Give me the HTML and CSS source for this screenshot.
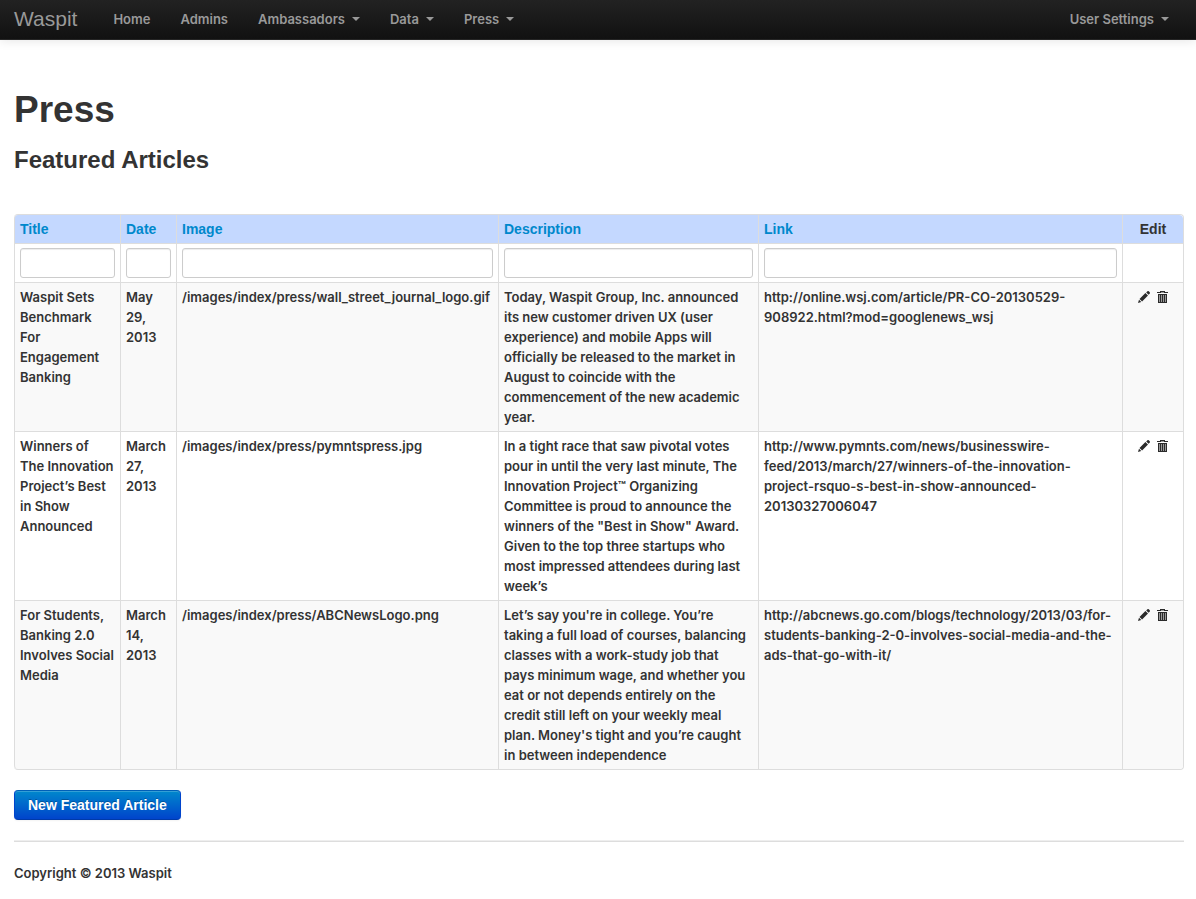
FILE: index.html
```html
<!DOCTYPE html>
<html lang="en">
<head>
<meta charset="utf-8">
<title>Press - Waspit</title>
<link rel="stylesheet" href="styles.css">
</head>
<body>
<svg class="sprite" aria-hidden="true">
  <symbol id="icon-pencil" viewBox="0 0 14 14">
    <path d="M1 13l1-3.300 2.300 2.200zM2.500 9L8.400 3l2.600 2.600-5.900 5.900zM9.200 2.400l1.200-1.200q.7-.6 1.400.1l.9.900q.7.700.1 1.400l-1.200 1.200z"/>
  </symbol>
  <symbol id="icon-trash" viewBox="0 0 14 14">
    <path d="M5 1h5v1h3v1H2V2h3z"/>
    <path d="M3 4h9v9H3z"/>
    <path class="slats" d="M4.500 5v7M6.500 5v7M8.500 5v7M10.500 5v7M6 2.500h3"/>
  </symbol>
</svg>
<nav class="navbar">
  <a class="brand" href="#">Waspit</a>
  <ul class="nav">
    <li><a href="#">Home</a></li>
    <li><a href="#">Admins</a></li>
    <li><a href="#">Ambassadors<span class="caret"></span></a></li>
    <li><a href="#">Data<span class="caret"></span></a></li>
    <li><a href="#">Press<span class="caret"></span></a></li>
  </ul>
  <ul class="nav nav-right">
    <li><a href="#">User Settings<span class="caret"></span></a></li>
  </ul>
</nav>
<main class="container">
  <h1>Press</h1>
  <h2>Featured Articles</h2>
  <table class="articles">
    <colgroup>
      <col class="col-title"><col class="col-date"><col class="col-image"><col class="col-description"><col><col class="col-edit">
    </colgroup>
    <thead>
      <tr>
        <th><a href="#">Title</a></th>
        <th><a href="#">Date</a></th>
        <th><a href="#">Image</a></th>
        <th><a href="#">Description</a></th>
        <th><a href="#">Link</a></th>
        <th class="edit">Edit</th>
      </tr>
      <tr class="filters">
        <td><input type="text" aria-label="Filter by title"></td>
        <td><input type="text" aria-label="Filter by date"></td>
        <td><input type="text" aria-label="Filter by image"></td>
        <td><input type="text" aria-label="Filter by description"></td>
        <td><input type="text" aria-label="Filter by link"></td>
        <td></td>
      </tr>
    </thead>
    <tbody>
      <tr>
        <td>Waspit Sets Benchmark For Engagement Banking</td>
        <td>May 29, 2013</td>
        <td>/images/index/press/wall_street_journal_logo.gif</td>
        <td>Today, Waspit Group, Inc. announced its new customer driven UX (user experience) and mobile Apps will officially be released to the market in August to coincide with the commencement of the new academic year.</td>
        <td>http://online.wsj.com/article/PR-CO-20130529-908922.html?mod=googlenews_wsj</td>
        <td class="edit"><div class="actions"><a href="#" aria-label="Edit"><svg><use href="#icon-pencil"/></svg></a><a href="#" aria-label="Delete"><svg><use href="#icon-trash"/></svg></a></div></td>
      </tr>
      <tr>
        <td>Winners of The Innovation Project’s Best in Show Announced</td>
        <td>March 27, 2013</td>
        <td>/images/index/press/pymntspress.jpg</td>
        <td>In a tight race that saw pivotal votes pour in until the very last minute, The Innovation Project™ Organizing Committee is proud to announce the winners of the "Best in Show" Award. Given to the top three startups who most impressed attendees during last week’s</td>
        <td>http://www.pymnts.com/news/businesswire-feed/2013/march/27/winners-of-the-innovation-project-rsquo-s-best-in-show-announced-20130327006047</td>
        <td class="edit"><div class="actions"><a href="#" aria-label="Edit"><svg><use href="#icon-pencil"/></svg></a><a href="#" aria-label="Delete"><svg><use href="#icon-trash"/></svg></a></div></td>
      </tr>
      <tr>
        <td>For Students, Banking 2.0 Involves Social Media</td>
        <td>March 14, 2013</td>
        <td>/images/index/press/ABCNewsLogo.png</td>
        <td>Let’s say you're in college. You’re taking a full load of courses, balancing classes with a work-study job that<br>pays minimum wage, and whether you eat or not depends entirely on the credit still left on your weekly meal plan. Money's tight and you’re caught<br>in between independence</td>
        <td>http://abcnews.go.com/blogs/technology/2013/03/for-students-banking-2-0-involves-social-media-and-the-ads-that-go-with-it/</td>
        <td class="edit"><div class="actions"><a href="#" aria-label="Edit"><svg><use href="#icon-pencil"/></svg></a><a href="#" aria-label="Delete"><svg><use href="#icon-trash"/></svg></a></div></td>
      </tr>
    </tbody>
  </table>
  <button type="button" class="btn">New Featured Article</button>
  <hr>
  <footer>Copyright © 2013 Waspit</footer>
</main>
</body>
</html>
```
FILE: styles.css
```css
* { box-sizing: border-box; }
body {
  margin: 0;
  background: #fff;
  color: #333;
  font: 600 13px/20px Inter, Arial, sans-serif;
}
a { color: #08c; text-decoration: none; }
.sprite { display: none; }

.navbar {
  display: flex;
  height: 40px;
  padding: 0 12px 0 14px;
  background: linear-gradient(#222, #111);
  border-bottom: 1px solid #252525;
  box-shadow: 0 1px 10px rgba(0, 0, 0, .1);
}
.navbar a { display: block; color: #999; line-height: 20px; }
.navbar .brand {
  padding: 9px 21px 0 0;
  font-family: "Liberation Sans", Arial, sans-serif;
  font-size: 21px;
  font-weight: 400;
}
.nav { display: flex; margin: 0; padding: 0; list-style: none; }
.nav a { padding: 9px 15px; }
.nav-right { margin-left: auto; }
.caret {
  display: inline-block;
  margin: 8px 0 0 7px;
  vertical-align: top;
  border: 4px solid transparent;
  border-top-color: #999;
  border-bottom: 0;
}

.container { padding: 40px 12px 0 14px; }
h1, h2 {
  margin: 10px 0;
  line-height: 40px;
  font-family: "Liberation Sans", Arial, sans-serif;
}
h1 { font-size: 37px; }
h2 { margin-bottom: 34px; font-size: 24px; }

.articles {
  width: 100%;
  margin-bottom: 20px;
  table-layout: fixed;
  border: 1px solid #ddd;
  border-left: 0;
  border-collapse: separate;
  border-spacing: 0;
  border-radius: 4px;
}
.col-title { width: 106px; }
.col-date { width: 56px; }
.col-image { width: 322px; }
.col-description { width: 260px; }
.col-edit { width: 61px; }
.articles th, .articles td {
  padding: 4px 5px;
  border-left: 1px solid #ddd;
  border-top: 1px solid #ddd;
  text-align: left;
  vertical-align: top;
}
.articles thead tr:first-child th { border-top: 0; }
.articles th {
  background: #c4d8ff;
  font: 700 14px/20px "Liberation Sans", Arial, sans-serif;
}
.articles th:first-child { border-top-left-radius: 4px; }
.articles th:last-child { border-top-right-radius: 4px; }
.articles tbody tr:nth-child(odd) td { background: #f9f9f9; }
.articles tbody tr:last-child td:first-child { border-bottom-left-radius: 4px; }
.articles tbody tr:last-child td:last-child { border-bottom-right-radius: 4px; }
.articles .edit { text-align: center; }
.articles input {
  display: block;
  width: 100%;
  height: 30px;
  padding: 4px 6px;
  border: 1px solid #ccc;
  border-radius: 3px;
  background: #fff;
  box-shadow: inset 0 1px 1px rgba(0, 0, 0, .075);
  font: inherit;
}
.actions { display: flex; justify-content: center; gap: 4px; padding: 3px 0; }
.actions a { display: block; width: 14px; height: 14px; }
.actions svg { display: block; width: 14px; height: 14px; fill: #2b2b2b; }
.slats { stroke: #999; stroke-width: 1; }

.btn {
  display: block;
  height: 30px;
  padding: 4px 13px;
  border: 1px solid;
  border-color: #0060b8 #04c #003aa8;
  border-radius: 4px;
  background: linear-gradient(#08c, #04c);
  box-shadow: inset 0 1px 0 rgba(255, 255, 255, .2), 0 1px 2px rgba(0, 0, 0, .05);
  color: #fff;
  font: 700 14px/20px "Liberation Sans", Arial, sans-serif;
  text-shadow: 0 -1px 0 rgba(0, 0, 0, .25);
}
hr {
  margin: 20px 0 21px;
  border: 0;
  border-top: 1px solid #eee;
  border-bottom: 1px solid #ddd;
}
```
